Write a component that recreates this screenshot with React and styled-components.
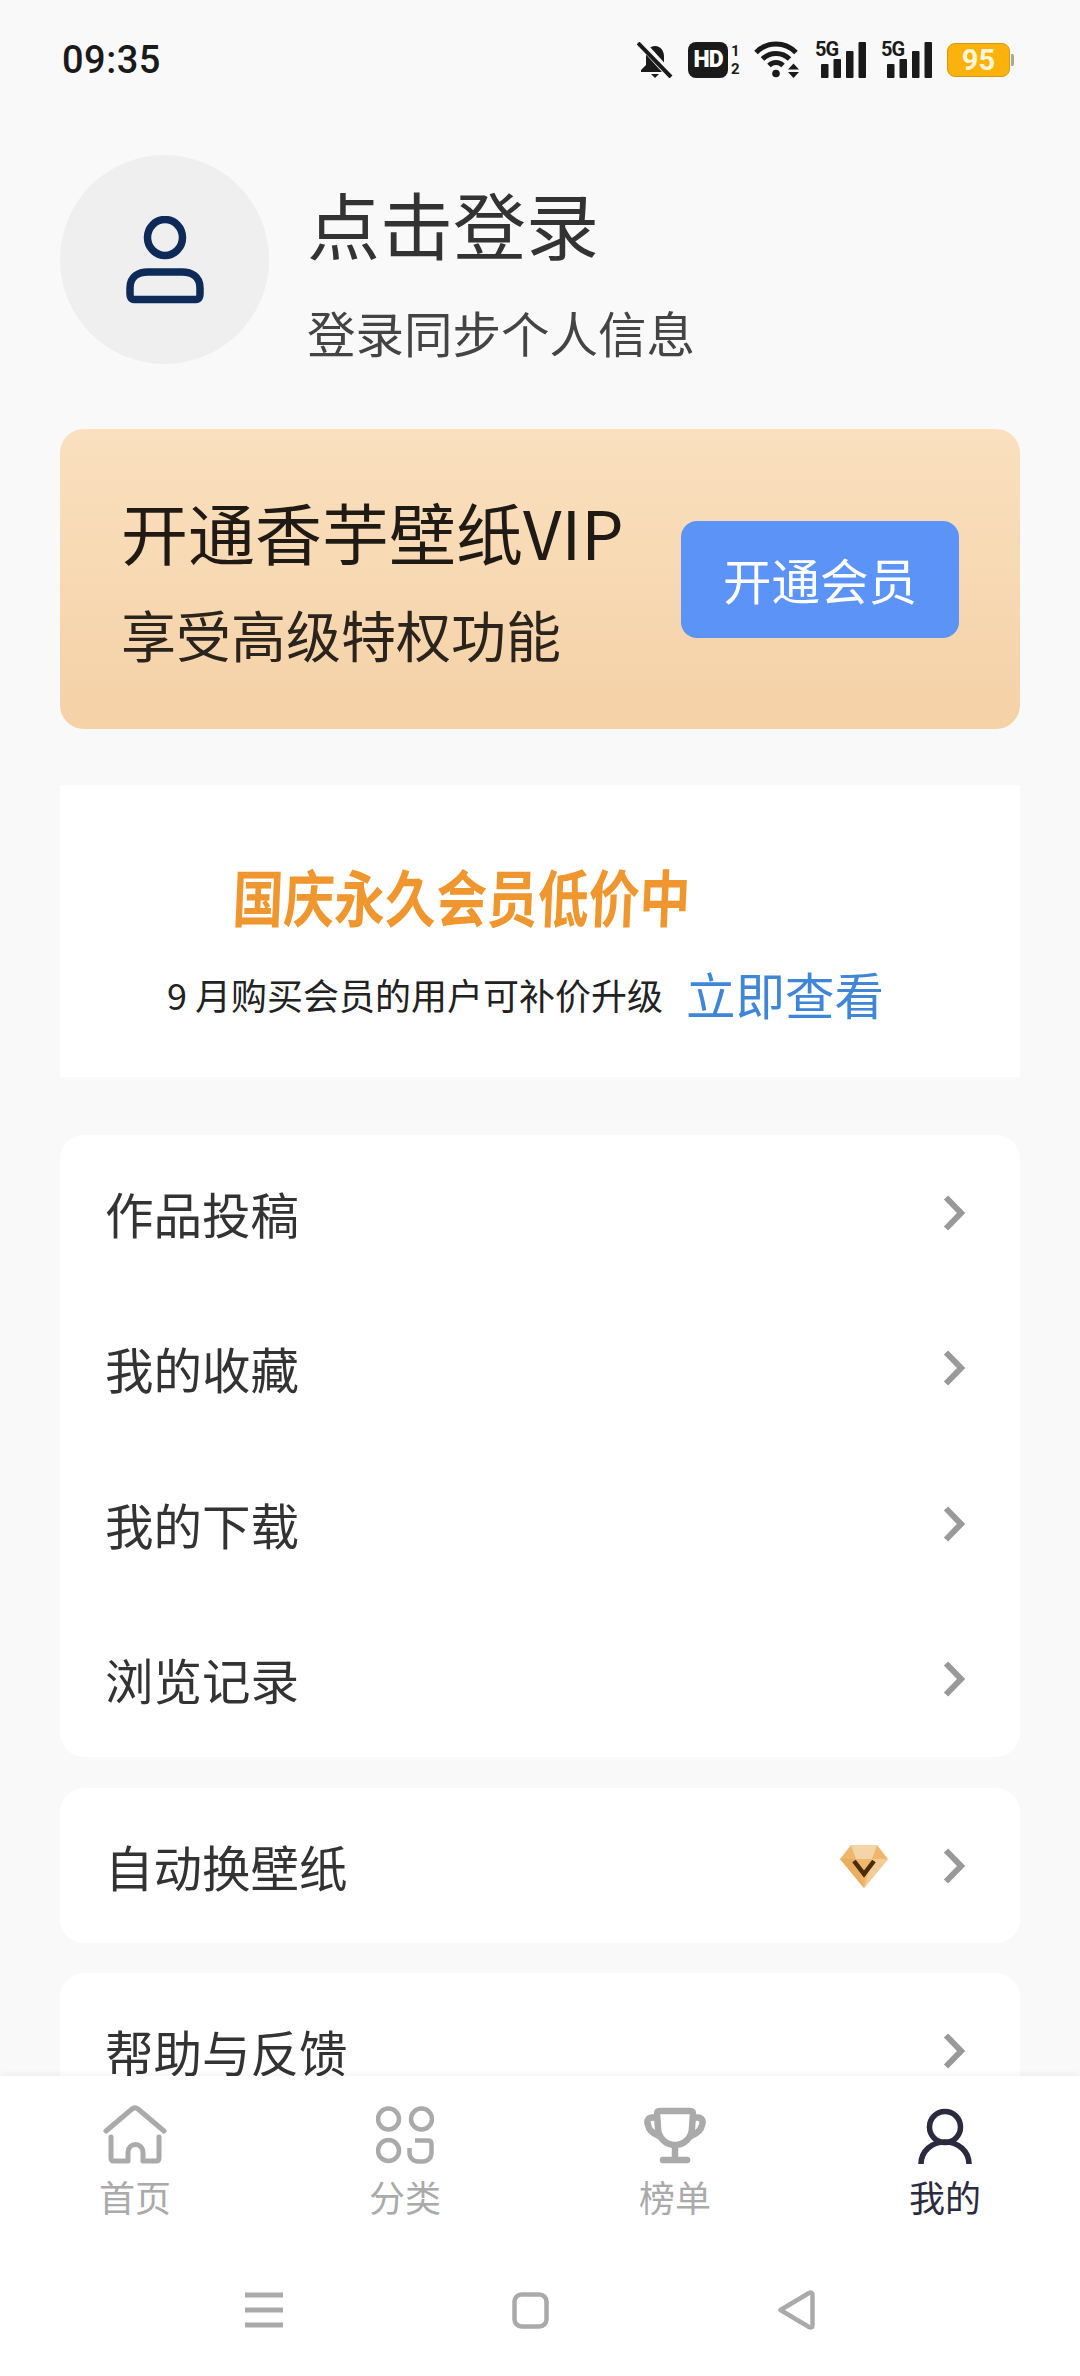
import React from 'react'
import styled, { createGlobalStyle } from 'styled-components'

const cjk = `"Noto Sans CJK SC", "Noto Sans", sans-serif`

const GlobalStyle = createGlobalStyle`
  html, body {
    margin: 0;
    padding: 0;
    background: #f9f9f9;
  }
  * {
    box-sizing: border-box;
  }
`

const Page = styled.div`
  display: flex;
  flex-direction: column;
  width: 1080px;
  height: 2376px;
  overflow: hidden;
  background: #f9f9f9;
  font-family: ${cjk};
`

const Scroller = styled.div`
  flex: 1;
  min-height: 0;
  overflow: hidden;
`

const StatusBar = styled.div`
  display: flex;
  align-items: center;
  justify-content: space-between;
  height: 120px;
  padding: 0 66px 1px 62px;
`

const Time = styled.span`
  font-family: Roboto, sans-serif;
  font-size: 38px;
  font-weight: 500;
  letter-spacing: 0.5px;
  color: #1a1a1a;
`

const StatusIcons = styled.div`
  display: flex;
  align-items: center;
  gap: 15px;
`

const HdWrap = styled.div`
  display: flex;
  align-items: center;
  gap: 3px;
`

const HdBadge = styled.span`
  display: flex;
  align-items: center;
  justify-content: center;
  width: 40px;
  height: 36px;
  border-radius: 8px;
  background: #1a1a1a;
  color: #fff;
  font-family: Roboto, sans-serif;
  font-size: 23px;
  font-weight: 900;
  letter-spacing: -1px;
`

const SimSlots = styled.span`
  display: flex;
  flex-direction: column;
  width: 8px;
  color: #1a1a1a;
  font-family: Roboto, sans-serif;
  font-size: 15px;
  font-weight: 700;
  line-height: 18px;
`

const SignalWrap = styled.div`
  position: relative;
  width: 51px;
  height: 36px;
`

const SignalType = styled.span`
  position: absolute;
  top: 0;
  left: 0;
  color: #1a1a1a;
  font-family: Roboto, sans-serif;
  font-size: 20px;
  font-weight: 700;
  letter-spacing: -1px;
  line-height: 15px;
`

const Battery = styled.div`
  display: flex;
  align-items: center;
  gap: 1px;
`

const BatteryBody = styled.span`
  display: flex;
  align-items: center;
  justify-content: center;
  width: 63px;
  height: 34px;
  border: 1px solid #d89a10;
  border-radius: 8px;
  background: #fbb20c;
  color: #fff6d8;
  font-family: Roboto, sans-serif;
  font-size: 29px;
  font-weight: 700;
`

const BatteryTip = styled.span`
  width: 3px;
  height: 12px;
  border-radius: 0 2px 2px 0;
  background: #b0a88e;
`

const Content = styled.div`
  padding: 35px 60px 0;
`

const Profile = styled.div`
  display: flex;
  align-items: flex-start;
  gap: 38px;
  height: 209px;
`

const Avatar = styled.div`
  display: flex;
  align-items: center;
  justify-content: center;
  flex: none;
  width: 209px;
  height: 209px;
  border-radius: 50%;
  background: #efeff0;
`

const ProfileText = styled.div`
  display: flex;
  flex-direction: column;
  gap: 50px;
  padding-top: 31px;
`

const LoginTitle = styled.div`
  font-size: 73px;
  line-height: 72px;
  color: #333;
`

const LoginHint = styled.div`
  font-size: 48.5px;
  line-height: 48px;
  color: #444;
`

const VipBanner = styled.div`
  display: flex;
  align-items: center;
  justify-content: space-between;
  height: 300px;
  margin-top: 65px;
  padding: 0 61px 0 61px;
  border-radius: 24px;
  background: linear-gradient(180deg, #fae0bf 0%, #f5d1a6 100%);
`

const VipText = styled.div`
  display: flex;
  flex-direction: column;
  gap: 42px;
`

const VipTitle = styled.div`
  font-size: 67px;
  line-height: 66px;
  color: #1f1a14;
`

const VipHint = styled.div`
  font-size: 55px;
  line-height: 54px;
  color: #2a241c;
`

const VipButton = styled.div`
  display: flex;
  align-items: center;
  justify-content: center;
  width: 278px;
  height: 117px;
  border-radius: 16px;
  background: #5b93f7;
  color: #fff;
  font-size: 48.5px;
`

const Promo = styled.div`
  height: 292px;
  margin-top: 56px;
  padding: 82px 0 0 107px;
  background: #fff;
`

const PromoHeadline = styled.div`
  margin-left: 66px;
  font-size: 62px;
  font-weight: 700;
  line-height: 57px;
  white-space: nowrap;
  color: #f0962e;
  transform: scaleX(0.82) skewX(-3deg);
  transform-origin: left center;
`

const PromoRow = styled.div`
  display: flex;
  align-items: center;
  gap: 23px;
  height: 48px;
  margin-top: 46px;
`

const PromoNote = styled.span`
  font-size: 36px;
  color: #222;
`

const PromoLink = styled.span`
  font-size: 49.5px;
  line-height: 48px;
  color: #3f86d6;
`

const Card = styled.div`
  margin-top: ${props => props.$gap}px;
  border-radius: 24px;
  background: #fff;
`

const Row = styled.div`
  display: flex;
  align-items: center;
  height: ${props => props.$height}px;
  padding: 0 55px 0 45px;
`

const RowLabel = styled.span`
  flex: 1;
  font-size: 48.5px;
  line-height: 48px;
  color: #333;
`

const RowBadge = styled.span`
  display: flex;
  margin-right: 55px;
`

const TabBar = styled.div`
  position: relative;
  flex: none;
  height: 300px;
  background: #fff;
  box-shadow: 0 -2px 6px rgba(0, 0, 0, 0.05);
`

const Tabs = styled.div`
  display: grid;
  grid-template-columns: repeat(4, 270px);
  height: 184px;
  padding-top: 29px;
`

const Tab = styled.div`
  display: flex;
  flex-direction: column;
  align-items: center;
  color: ${props => (props.$active ? '#2b2a3e' : '#aaa')};
`

const TabIcon = styled.div`
  display: flex;
  align-items: flex-end;
  justify-content: center;
  height: 60px;
`

const TabLabel = styled.span`
  margin-top: 11px;
  font-size: 36px;
  line-height: 40px;
`

const SystemNav = styled.div`
  display: grid;
  grid-template-columns: 264px 268px 264px;
  justify-items: center;
  align-items: center;
  height: 116px;
  padding: 0 0 16px 132px;
`

const Chevron = () => (
  <svg width="22" height="36" viewBox="0 0 22 36">
    <polyline points="3,2.5 18,18 3,33.5" fill="none" stroke="#999" strokeWidth="6" />
  </svg>
)

const BellOff = () => (
  <svg width="36" height="36" viewBox="0 0 36 36">
    <path d="M18 4c-6 0-9 5-9 11v8l-5 5v2h28v-2l-5-5v-8c0-6-3-11-9-11z" fill="#1a1a1a" />
    <path d="M14 32h8l-4 4z" fill="#1a1a1a" />
    <line x1="3" y1="0" x2="35" y2="35" stroke="#f9f9f9" strokeWidth="8" />
    <line x1="1" y1="1" x2="34" y2="35" stroke="#1a1a1a" strokeWidth="4" />
  </svg>
)

const Wifi = () => (
  <svg width="46" height="37" viewBox="0 0 46 37">
    <g fill="none" stroke="#1a1a1a" strokeWidth="5">
      <path d="M2 11.5C13 0 31 0 42 11.5" />
      <path d="M8.5 18C16 10.5 28 10.5 35.5 18" />
      <path d="M15 24.5C19 20.5 25 20.5 29 24.5" />
    </g>
    <circle cx="22" cy="32.5" r="3.8" fill="#1a1a1a" />
    <path d="M34 28.5l5.5-6 5.5 6zM34 31h11l-5.5 6z" fill="#1a1a1a" />
  </svg>
)

const Signal = () => (
  <SignalWrap>
    <SignalType>5G</SignalType>
    <svg width="51" height="36" viewBox="0 0 51 36">
      <g fill="#1a1a1a">
        <rect x="6" y="22" width="7.5" height="14" rx="1" />
        <rect x="18.5" y="17" width="7.5" height="19" rx="1" />
        <rect x="31" y="9" width="7.5" height="27" rx="1" />
        <rect x="43.5" y="0" width="7.5" height="36" rx="1" />
      </g>
    </svg>
  </SignalWrap>
)

const UserIcon = () => (
  <svg width="78" height="88" viewBox="0 0 78 88">
    <ellipse cx="39" cy="21.5" rx="17.5" ry="18" fill="none" stroke="#0d2a58" strokeWidth="7.5" />
    <path
      d="M4 78V72C4 60 13 56 22 56H56C65 56 74 60 74 72V78C74 81 73 83.5 70 83.5H8C5 83.5 4 81 4 78Z"
      fill="none"
      stroke="#0d2a58"
      strokeWidth="7.5"
    />
  </svg>
)

const Diamond = () => (
  <svg width="48" height="44" viewBox="0 0 48 44">
    <path d="M11 1H37L48 15L24 44L0 15Z" fill="#eeb76c" />
    <path d="M11 1H37L32 15H16Z" fill="#f5d4a6" />
    <path d="M0 15H16L24 44Z" fill="#eaae60" />
    <path d="M48 15H32L24 44Z" fill="#f3cb94" />
    <path d="M14 17L24 30L34 17" fill="none" stroke="#4a2c0c" strokeWidth="4.5" />
  </svg>
)

const HomeIcon = () => (
  <svg width="64" height="60" viewBox="0 0 64 60">
    <g fill="none" stroke="currentColor" strokeWidth="5" strokeLinecap="round" strokeLinejoin="round">
      <path d="M3 26L29 4Q32 1.5 35 4L61 26" />
      <path d="M8 32V53Q8 56 11 56H25V47A7.5 7.5 0 0 1 40 47V56H53Q56 56 56 53V32" />
    </g>
  </svg>
)

const GridIcon = () => (
  <svg width="58" height="60" viewBox="0 0 58 60">
    <g fill="none" stroke="currentColor" strokeWidth="4.5">
      <circle cx="12.5" cy="14" r="10.5" />
      <circle cx="45.5" cy="14" r="10.5" />
      <circle cx="12.5" cy="45.5" r="10.5" />
      <path d="M39 35.5H52Q55.5 35.5 55.5 39V48A8.5 8.5 0 0 1 47 56.5H42A8.5 8.5 0 0 1 33.5 48V43" />
    </g>
  </svg>
)

const TrophyIcon = () => (
  <svg width="62" height="60" viewBox="0 0 62 60">
    <g fill="none" stroke="currentColor" strokeWidth="6.5" strokeLinecap="round" strokeLinejoin="round">
      <path d="M16 6H46Q49 6 49 9L48 23A17 17 0 0 1 14 23L13 9Q13 6 16 6Z" />
      <path d="M12 13C5 11 2 15 4 20C5 26 10 29 15 31" />
      <path d="M50 13C57 11 60 15 58 20C57 26 52 29 47 31" />
      <path d="M31 42V54" />
      <path d="M19 55H43" />
    </g>
  </svg>
)

const PersonIcon = () => (
  <svg width="54" height="60" viewBox="0 0 54 60">
    <circle cx="27" cy="22" r="15.5" fill="none" stroke="currentColor" strokeWidth="5.5" />
    <path d="M3 59C3 46 14 37 27 37C40 37 51 46 51 59" fill="none" stroke="currentColor" strokeWidth="5.5" />
  </svg>
)

const MenuKey = () => (
  <svg width="38" height="36" viewBox="0 0 38 36">
    <g stroke="#aaa" strokeWidth="5">
      <line x1="0" y1="3" x2="38" y2="3" />
      <line x1="0" y1="18" x2="38" y2="18" />
      <line x1="0" y1="33" x2="38" y2="33" />
    </g>
  </svg>
)

const HomeKey = () => (
  <svg width="37" height="37" viewBox="0 0 37 37">
    <rect x="2.5" y="2.5" width="32" height="32" rx="7" fill="none" stroke="#aaa" strokeWidth="4.5" />
  </svg>
)

const BackKey = () => (
  <svg width="38" height="40" viewBox="0 0 38 40">
    <path
      d="M3.5 20L32 3Q35.5 1.5 35.5 5V35Q35.5 38.5 32 37Z"
      fill="none"
      stroke="#aaa"
      strokeWidth="4.5"
      strokeLinejoin="round"
    />
  </svg>
)

const mainRows = ['作品投稿', '我的收藏', '我的下载', '浏览记录']

const tabs = [
  { label: '首页', icon: <HomeIcon /> },
  { label: '分类', icon: <GridIcon /> },
  { label: '榜单', icon: <TrophyIcon /> },
  { label: '我的', icon: <PersonIcon />, active: true }
]

const App = () => (
  <Page>
    <GlobalStyle />
    <Scroller>
      <StatusBar>
        <Time>09:35</Time>
        <StatusIcons>
          <BellOff />
          <HdWrap>
            <HdBadge>HD</HdBadge>
            <SimSlots>
              <span>1</span>
              <span>2</span>
            </SimSlots>
          </HdWrap>
          <Wifi />
          <Signal />
          <Signal />
          <Battery>
            <BatteryBody>95</BatteryBody>
            <BatteryTip />
          </Battery>
        </StatusIcons>
      </StatusBar>
      <Content>
        <Profile>
          <Avatar>
            <UserIcon />
          </Avatar>
          <ProfileText>
            <LoginTitle>点击登录</LoginTitle>
            <LoginHint>登录同步个人信息</LoginHint>
          </ProfileText>
        </Profile>
        <VipBanner>
          <VipText>
            <VipTitle>开通香芋壁纸VIP</VipTitle>
            <VipHint>享受高级特权功能</VipHint>
          </VipText>
          <VipButton>开通会员</VipButton>
        </VipBanner>
        <Promo>
          <PromoHeadline>国庆永久会员低价中</PromoHeadline>
          <PromoRow>
            <PromoNote>9 月购买会员的用户可补价升级</PromoNote>
            <PromoLink>立即查看</PromoLink>
          </PromoRow>
        </Promo>
        <Card $gap={58}>
          {mainRows.map(label => (
            <Row key={label} $height={155.5}>
              <RowLabel>{label}</RowLabel>
              <Chevron />
            </Row>
          ))}
        </Card>
        <Card $gap={31}>
          <Row $height={155}>
            <RowLabel>自动换壁纸</RowLabel>
            <RowBadge>
              <Diamond />
            </RowBadge>
            <Chevron />
          </Row>
        </Card>
        <Card $gap={30}>
          <Row $height={156}>
            <RowLabel>帮助与反馈</RowLabel>
            <Chevron />
          </Row>
        </Card>
      </Content>
    </Scroller>
    <TabBar>
      <Tabs>
        {tabs.map(tab => (
          <Tab key={tab.label} $active={tab.active}>
            <TabIcon>{tab.icon}</TabIcon>
            <TabLabel>{tab.label}</TabLabel>
          </Tab>
        ))}
      </Tabs>
      <SystemNav>
        <MenuKey />
        <HomeKey />
        <BackKey />
      </SystemNav>
    </TabBar>
  </Page>
)

export default App
